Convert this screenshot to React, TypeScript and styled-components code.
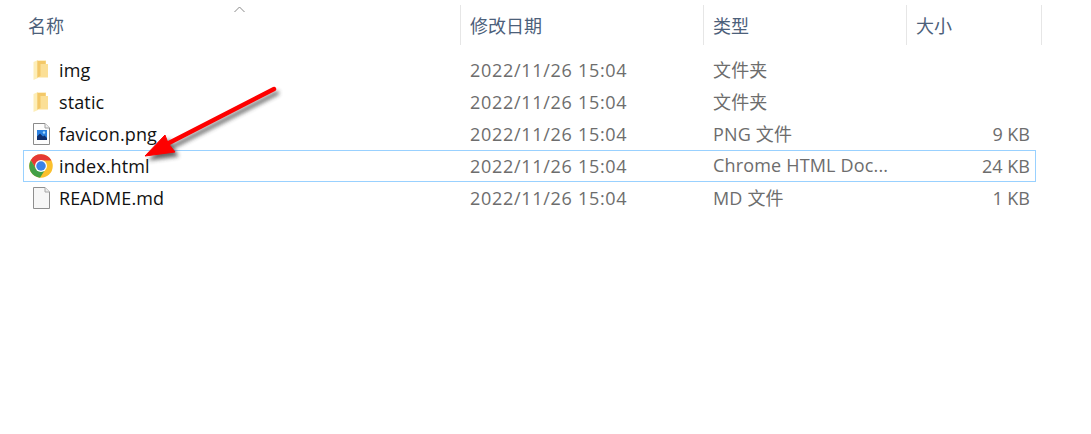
import React from "react";
import styled, { createGlobalStyle } from "styled-components";

const Global = createGlobalStyle`
  html, body { margin: 0; padding: 0; background: #fff; }
  body { font-family: "Open Sans", "Noto Sans CJK SC", sans-serif; }
`;

const Page = styled.div`
  position: relative;
  width: 1091px;
  height: 434px;
  overflow: hidden;
  padding: 5px 0 0 23px;
  box-sizing: border-box;
  background: #fff;
`;

const COLS = "437px 243px 203px";

const Header = styled.div`
  display: grid;
  grid-template-columns: ${COLS} 136px;
  width: 1019px;
  height: 40px;
`;

const HeaderCell = styled.div<{ $last?: boolean; $first?: boolean }>`
  display: flex;
  align-items: center;
  padding-left: ${(p) => (p.$first ? 5 : 9)}px;
  padding-top: 2px;
  box-sizing: border-box;
  font-size: 18px;
  line-height: 1;
  color: #4c607a;
  border-left: ${(p) => (p.$first ? "none" : "1px solid #e6e6e6")};
  border-right: ${(p) => (p.$last ? "1px solid #e6e6e6" : "none")};
`;

const SortCaret = styled.svg`
  position: absolute;
  left: 233px;
  top: 5px;
  width: 13px;
  height: 8px;
`;

const Rows = styled.div`
  margin-top: 9px;
  width: 1013px;
`;

const Row = styled.div<{ $focused?: boolean }>`
  display: grid;
  grid-template-columns: ${COLS} 130px;
  height: 32px;
  box-sizing: border-box;
  align-items: center;
  font-size: 18px;
  outline: ${(p) => (p.$focused ? "1px solid #99d1ff" : "none")};
  outline-offset: -1px;
`;

const NameCell = styled.div`
  display: flex;
  align-items: center;
  color: #111;
  white-space: nowrap;
  letter-spacing: 0.12px;
`;

const IconSlot = styled.span`
  display: flex;
  align-items: center;
  justify-content: center;
  width: 36px;
  height: 32px;
  flex: none;
`;

const DateCell = styled.div`
  padding-left: 10px;
  color: #6d6d6d;
  white-space: nowrap;
  letter-spacing: 0.7px;
`;

const TypeCell = styled.div`
  padding: 0 0 2px 10px;
  color: #6d6d6d;
  white-space: nowrap;
  letter-spacing: 0.17px;
`;

const SizeCell = styled.div`
  padding-right: 6px;
  color: #6d6d6d;
  text-align: right;
  white-space: nowrap;
`;

const ArrowLayer = styled.svg`
  position: absolute;
  left: 0;
  top: 0;
  width: 1091px;
  height: 434px;
  pointer-events: none;
`;

const FolderIcon = () => (
  <svg width="16" height="22" viewBox="0 0 16 22">
    <path d="M0.5 3 L5 1 L5 19 L0.5 21 Z" fill="#fdeeb8" />
    <path d="M4 1.5 L13 1.5 L13 5 L15 5 L15 18.5 L4 18.5 Z" fill="#fbdf96" />
    <path d="M4.5 2 L12.5 2 L12.5 5 L7.5 5 L7.5 17 L4.5 18.5 Z" fill="#f3c868" />
  </svg>
);

const PngIcon = () => (
  <svg width="17" height="22" viewBox="0 0 17 22">
    <path d="M0.5 0.5 H12 L16.5 5 V21.5 H0.5 Z" fill="#fdfdfd" stroke="#8a8a8a" />
    <path d="M12 0.5 V5 H16.5" fill="#f2f2f2" stroke="#a0a0a0" />
    <rect x="4" y="7" width="10" height="10" fill="#2a80e0" />
    <path d="M4 17 V13.5 L7 10.5 L10 13.5 L11.5 12.5 L14 15 V17 Z" fill="#0f2f6e" />
    <circle cx="11" cy="9.5" r="1.2" fill="#a8dcff" />
  </svg>
);

const DocIcon = () => (
  <svg width="17" height="22" viewBox="0 0 17 22">
    <path d="M0.5 0.5 H12 L16.5 5 V21.5 H0.5 Z" fill="#f7f7f7" stroke="#8f8f8f" />
    <path d="M12 0.5 V5 H16.5" fill="#ededed" stroke="#a8a8a8" />
  </svg>
);

const ChromeIcon = () => (
  <svg width="24" height="24" viewBox="0 0 48 48">
    <circle cx="24" cy="24" r="23.5" fill="#fbc02d" />
    <path d="M44.8 13 A23.5 23.5 0 0 0 3.65 12.25 L14 29.5 L24 13 Z" fill="#e53935" />
    <path d="M3.65 12.25 A23.5 23.5 0 0 0 22 47.4 L33.5 29.5 L14 29.5 Z" fill="#43a047" />
    <circle cx="24" cy="24" r="12" fill="#fff" />
    <circle cx="24" cy="24" r="9.5" fill="#3b82e8" />
  </svg>
);

const rows = [
  { name: "img", icon: <FolderIcon />, type: "文件夹", size: "" },
  { name: "static", icon: <FolderIcon />, type: "文件夹", size: "" },
  { name: "favicon.png", icon: <PngIcon />, type: "PNG 文件", size: "9 KB" },
  { name: "index.html", icon: <ChromeIcon />, type: "Chrome HTML Doc...", size: "24 KB", focused: true },
  { name: "README.md", icon: <DocIcon />, type: "MD 文件", size: "1 KB" },
];

export default function App() {
  return (
    <Page>
      <Global />
      <Header>
        <HeaderCell $first>名称</HeaderCell>
        <HeaderCell>修改日期</HeaderCell>
        <HeaderCell>类型</HeaderCell>
        <HeaderCell $last>大小</HeaderCell>
      </Header>
      <SortCaret viewBox="0 0 13 8">
        <path d="M1.5 7 L6.5 2 L11.5 7" fill="none" stroke="#8a8a8a" strokeWidth="1" />
      </SortCaret>
      <Rows>
        {rows.map((r) => (
          <Row key={r.name} $focused={r.focused}>
            <NameCell>
              <IconSlot>{r.icon}</IconSlot>
              {r.name}
            </NameCell>
            <DateCell>2022/11/26 15:04</DateCell>
            <TypeCell>{r.type}</TypeCell>
            <SizeCell>{r.size}</SizeCell>
          </Row>
        ))}
      </Rows>
      <ArrowLayer viewBox="0 0 1091 434">
        <defs>
          <filter id="sh" x="-20%" y="-20%" width="150%" height="150%">
            <feGaussianBlur stdDeviation="2.2" />
          </filter>
        </defs>
        <g fill="#333" stroke="#333" opacity="0.75" filter="url(#sh)" transform="translate(3 4)">
          <path d="M274 89 L165 145" strokeWidth="4" strokeLinecap="round" />
          <path d="M146 156 L166 135 L169 143 L175 152 Z" />
        </g>
        <path d="M274 89 L165 145" stroke="#fe0000" strokeWidth="4.5" strokeLinecap="round" fill="none" />
        <path d="M145 156 L165 135 L168 143 L175 152 Z" fill="#fe0000" stroke="#fe0000" strokeLinejoin="round" />
      </ArrowLayer>
    </Page>
  );
}
